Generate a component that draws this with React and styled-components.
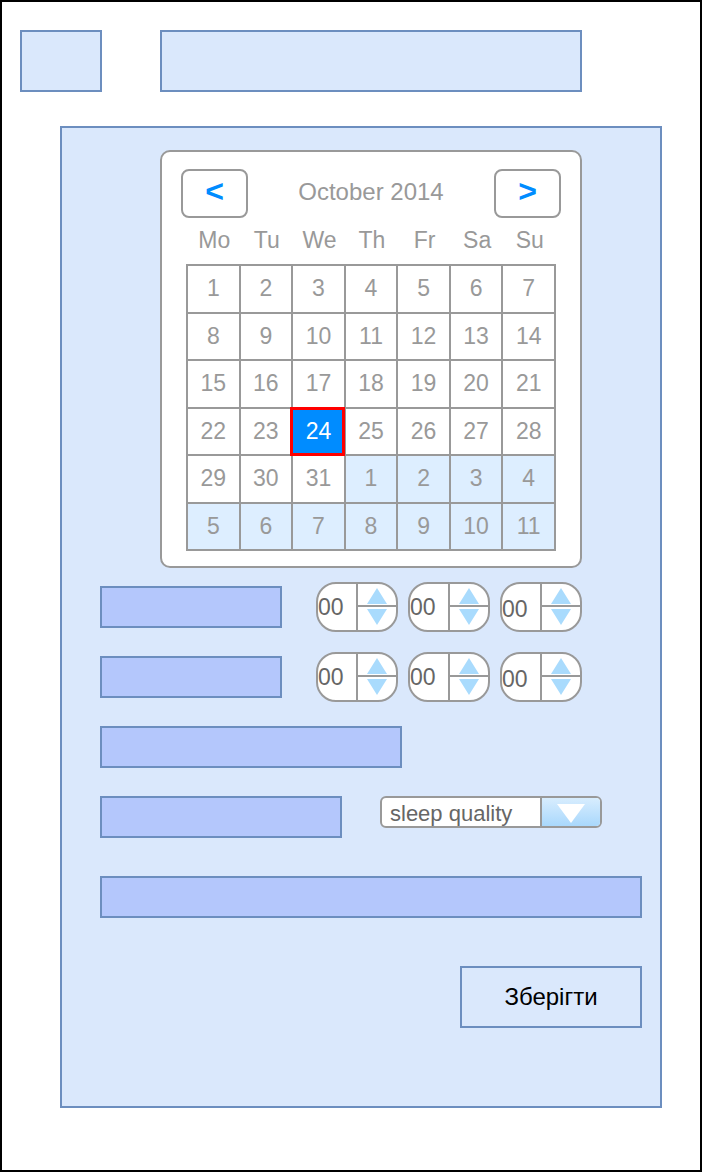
import React from "react";
import styled, { createGlobalStyle } from "styled-components";

const Global = createGlobalStyle`
  * { box-sizing: border-box; }
  html, body { margin: 0; padding: 0; background: #fff; }
  body { font-family: "Liberation Sans", Arial, sans-serif; }
`;

const Frame = styled.div`
  width: 702px;
  height: 1172px;
  border: 2px solid #000;
  background: #fff;
  padding: 28px 0 0 18px;
  display: flex;
  flex-direction: column;
`;

const TopBar = styled.div`
  display: flex;
  gap: 58px;
`;

const TopBox = styled.div`
  width: ${(p) => p.$w}px;
  height: 62px;
  background: #dae8fc;
  border: 2px solid #6c8ebf;
`;

const Panel = styled.div`
  margin: 34px 0 0 40px;
  width: 602px;
  height: 982px;
  background: #dae8fc;
  border: 2px solid #6c8ebf;
  padding: 22px 0 0 38px;
  display: flex;
  flex-direction: column;
`;

const Calendar = styled.div`
  margin-left: 60px;
  width: 422px;
  height: 418px;
  background: #fff;
  border: 2px solid #999;
  border-radius: 10px;
  padding: 17px 19px 15px;
  display: flex;
  flex-direction: column;
`;

const Nav = styled.div`
  display: flex;
  align-items: center;
  justify-content: space-between;
  height: 49px;
`;

const NavButton = styled.div`
  width: 67px;
  height: 49px;
  border: 2px solid #999;
  border-radius: 8px;
  display: flex;
  align-items: center;
  justify-content: center;
  color: #008cff;
  font-size: 32px;
  font-weight: bold;
  line-height: 1;
  padding-bottom: 5px;
`;

const Title = styled.div`
  color: #999;
  font-size: 24px;
  line-height: 1;
  padding-bottom: 4px;
`;

const WeekRow = styled.div`
  margin-left: 5px;
  width: 370px;
  height: 46px;
  padding: 0 0 2px 2px;
  display: grid;
  grid-template-columns: repeat(7, 1fr);
  align-items: center;
`;

const WeekDay = styled.div`
  text-align: center;
  color: #999;
  font-size: 23px;
`;

const Grid = styled.div`
  margin-left: 5px;
  width: 370px;
  height: 287px;
  border-top: 2px solid #999;
  border-left: 2px solid #999;
  display: grid;
  grid-template-columns: repeat(7, 1fr);
  grid-template-rows: repeat(6, 1fr);
`;

const Cell = styled.div`
  position: relative;
  border-right: 2px solid #999;
  border-bottom: 2px solid #999;
  display: flex;
  align-items: center;
  justify-content: center;
  font-size: 23px;
  color: ${(p) => (p.$selected ? "#fff" : "#999")};
  background: ${(p) =>
    p.$selected ? "#008cff" : p.$other ? "#ddeeff" : "#fff"};
  ${(p) =>
    p.$selected &&
    `
    &::after {
      content: "";
      position: absolute;
      z-index: 1;
      top: -2px;
      left: -3px;
      right: -1px;
      bottom: -2px;
      border: 3px solid #ff0000;
    }
  `}
`;

const Form = styled.div`
  margin-top: 18px;
  width: 542px;
  display: flex;
  flex-direction: column;
`;

const Row = styled.div`
  display: flex;
  align-items: center;
  height: 42px;
  margin-top: ${(p) => p.$top || 0}px;
`;

const Field = styled.div`
  width: ${(p) => p.$w}px;
  height: 42px;
  background: #b4c7fc;
  border: 2px solid #6c8ebf;
  flex-shrink: 0;
`;

const Spinners = styled.div`
  display: flex;
  gap: 10px;
  margin-left: 34px;
`;

const Spinner = styled.div`
  width: 82px;
  height: 50px;
  border: 2px solid #999;
  border-radius: 20px;
  background: #fff;
  overflow: hidden;
  display: flex;
`;

const SpinValue = styled.div`
  width: 40px;
  border-right: 2px solid #999;
  display: flex;
  align-items: center;
  padding-top: ${(p) => p.$dy || 0}px;
  font-size: 23px;
  color: #666;
  line-height: 1;
`;

const SpinArrows = styled.div`
  flex: 1;
  display: flex;
  flex-direction: column;
`;

const SpinHalf = styled.div`
  height: 23px;
  display: flex;
  justify-content: center;
  align-items: ${(p) => (p.$up ? "flex-end" : "flex-start")};
  border-bottom: ${(p) => (p.$up ? "2px solid #999" : "none")};
  padding: ${(p) => (p.$up ? "0 0 1px" : "2px 0 0")};
`;

const Select = styled.div`
  align-self: flex-start;
  margin-left: 38px;
  width: 222px;
  height: 32px;
  border: 2px solid #999;
  border-radius: 6px;
  overflow: hidden;
  display: flex;
  background: #fff;
`;

const SelectText = styled.div`
  flex: 1;
  border-right: 2px solid #999;
  padding-left: 8px;
  display: flex;
  align-items: center;
  font-size: 22px;
  color: #666;
  padding-top: 3px;
`;

const SelectArrow = styled.div`
  width: 58px;
  background: linear-gradient(180deg, #d8edfe 0%, #a9d8fc 100%);
  display: flex;
  align-items: center;
  justify-content: center;
  padding-top: 2px;
`;

const SaveButton = styled.div`
  align-self: flex-end;
  margin-top: 48px;
  width: 182px;
  height: 62px;
  background: #dae8fc;
  border: 2px solid #6c8ebf;
  display: flex;
  align-items: center;
  justify-content: center;
  font-size: 24px;
  color: #000;
`;

const Tri = ({ down }) => (
  <svg width="20" height="16" viewBox="0 0 20 16">
    <polygon
      points={down ? "0,0 20,0 10,16" : "10,0 20,16 0,16"}
      fill="#a9dbfd"
    />
  </svg>
);

const SpinnerCtl = ({ dy }) => (
  <Spinner>
    <SpinValue $dy={dy}>00</SpinValue>
    <SpinArrows>
      <SpinHalf $up>
        <Tri />
      </SpinHalf>
      <SpinHalf>
        <Tri down />
      </SpinHalf>
    </SpinArrows>
  </Spinner>
);

const weekDays = ["Mo", "Tu", "We", "Th", "Fr", "Sa", "Su"];

const days = [];
for (let i = 1; i <= 31; i++) days.push({ n: i, other: false });
for (let i = 1; i <= 11; i++) days.push({ n: i, other: true });

export default function App() {
  return (
    <>
      <Global />
      <Frame>
        <TopBar>
          <TopBox $w={82} />
          <TopBox $w={422} />
        </TopBar>
        <Panel>
          <Calendar>
            <Nav>
              <NavButton>&lt;</NavButton>
              <Title>October 2014</Title>
              <NavButton>&gt;</NavButton>
            </Nav>
            <WeekRow>
              {weekDays.map((d) => (
                <WeekDay key={d}>{d}</WeekDay>
              ))}
            </WeekRow>
            <Grid>
              {days.map((d, i) => (
                <Cell
                  key={i}
                  $other={d.other}
                  $selected={!d.other && d.n === 24}
                >
                  {d.n}
                </Cell>
              ))}
            </Grid>
          </Calendar>
          <Form>
            <Row>
              <Field $w={182} />
              <Spinners>
                <SpinnerCtl />
                <SpinnerCtl />
                <SpinnerCtl dy={4} />
              </Spinners>
            </Row>
            <Row $top={28}>
              <Field $w={182} />
              <Spinners>
                <SpinnerCtl />
                <SpinnerCtl />
                <SpinnerCtl dy={4} />
              </Spinners>
            </Row>
            <Row $top={28}>
              <Field $w={302} />
            </Row>
            <Row $top={28}>
              <Field $w={242} />
              <Select>
                <SelectText>sleep quality</SelectText>
                <SelectArrow>
                  <svg width="28" height="19" viewBox="0 0 28 19">
                    <polygon points="0,0 28,0 14,19" fill="#fff" />
                  </svg>
                </SelectArrow>
              </Select>
            </Row>
            <Row $top={38}>
              <Field $w={542} />
            </Row>
            <SaveButton>Зберігти</SaveButton>
          </Form>
        </Panel>
      </Frame>
    </>
  );
}
